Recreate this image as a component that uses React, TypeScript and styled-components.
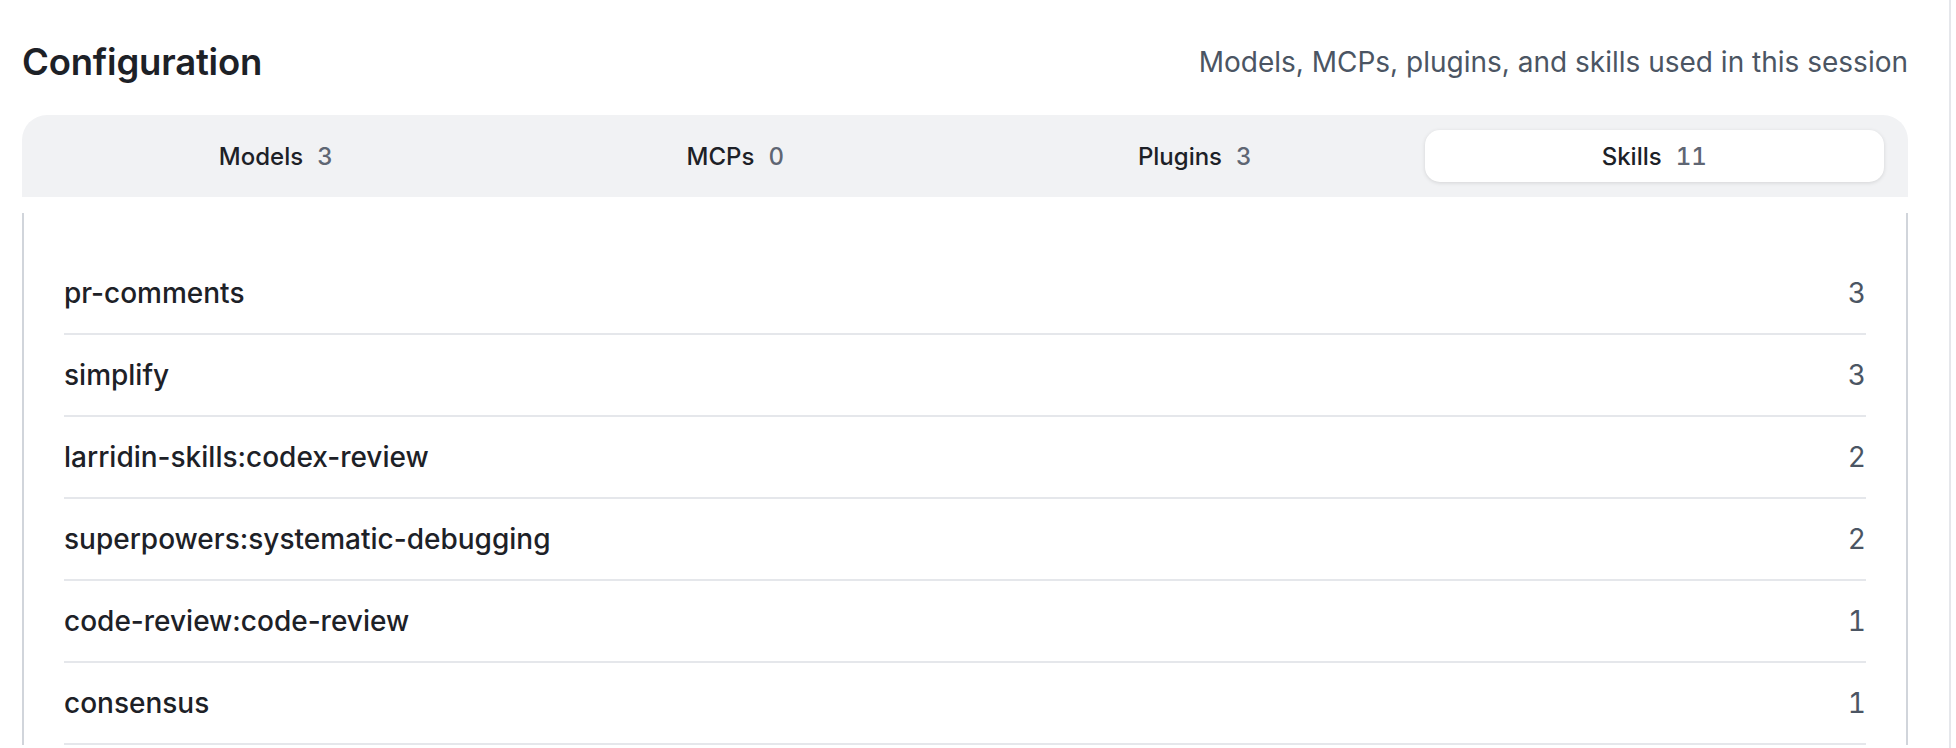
import React, { useState } from "react";
import styled, { createGlobalStyle } from "styled-components";

type TabKey = "models" | "mcps" | "plugins" | "skills";

const tabs: { key: TabKey; label: string; count: number }[] = [
  { key: "models", label: "Models", count: 3 },
  { key: "mcps", label: "MCPs", count: 0 },
  { key: "plugins", label: "Plugins", count: 3 },
  { key: "skills", label: "Skills", count: 11 },
];

const skills: { name: string; uses: number }[] = [
  { name: "pr-comments", uses: 3 },
  { name: "simplify", uses: 3 },
  { name: "larridin-skills:codex-review", uses: 2 },
  { name: "superpowers:systematic-debugging", uses: 2 },
  { name: "code-review:code-review", uses: 1 },
  { name: "consensus", uses: 1 },
];

const App: React.FC = () => {
  const [active, setActive] = useState<TabKey>("skills");

  return (
    <>
      <GlobalStyle />
      <Page>
        <Main>
          <Header>
            <Title>Configuration</Title>
            <Subtitle>Models, MCPs, plugins, and skills used in this session</Subtitle>
          </Header>

          <TabList>
            {tabs.map((t) => (
              <Tab key={t.key} $active={active === t.key} onClick={() => setActive(t.key)}>
                {t.label}
                <TabCount>{t.count}</TabCount>
              </Tab>
            ))}
          </TabList>

          <Panel>
            {skills.map((s) => (
              <Row key={s.name}>
                <RowName>{s.name}</RowName>
                <RowCount>{s.uses}</RowCount>
              </Row>
            ))}
          </Panel>
        </Main>
      </Page>
    </>
  );
};

const GlobalStyle = createGlobalStyle`
  html, body {
    margin: 0;
    background: #ffffff;
  }
  body {
    font-family: Inter, "Noto Sans", sans-serif;
    color: #1d2127;
    -webkit-font-smoothing: antialiased;
  }
`;

const Page = styled.div`
  display: flex;
  min-height: 748px;
`;

const Main = styled.main`
  width: 1951px;
  box-sizing: border-box;
  border-right: 2px solid #e5e7eb;
  padding: 40px 41px 0 22px;
`;

const Header = styled.header`
  display: flex;
  justify-content: space-between;
  align-items: center;
  height: 44px;
  margin-bottom: 31px;
`;

const Title = styled.h2`
  margin: 0;
  font-size: 36.5px;
  font-weight: 600;
  letter-spacing: -0.2px;
  color: #1d2127;
`;

const Subtitle = styled.p`
  margin: 0;
  font-size: 28px;
  color: #4b5563;
`;

const TabList = styled.div`
  display: grid;
  grid-template-columns: repeat(4, 1fr);
  padding: 15px 24px;
  background: #f1f2f4;
  border-radius: 25px 25px 0 0;
`;

const Tab = styled.button<{ $active: boolean }>`
  display: flex;
  align-items: center;
  justify-content: center;
  height: 52px;
  border: none;
  border-radius: 15px;
  font-family: inherit;
  font-size: 24px;
  font-weight: 500;
  color: #1d2127;
  cursor: pointer;
  background: ${(p) => (p.$active ? "#ffffff" : "transparent")};
  box-shadow: ${(p) => (p.$active ? "0 1px 4px rgba(0, 0, 0, 0.12)" : "none")};
`;

const TabCount = styled.span`
  margin-left: 14px;
  color: #5f6673;
  font-variant-numeric: tabular-nums;
`;

const Panel = styled.section`
  margin-top: 16px;
  padding: 40px 40px 0;
  border-left: 2px solid #d1d5db;
  border-right: 2px solid #d1d5db;
`;

const Row = styled.div`
  display: flex;
  align-items: center;
  justify-content: space-between;
  height: 82px;
  box-sizing: border-box;
  border-bottom: 2px solid #e5e7eb;
  font-size: 28px;
  font-weight: 500;
`;

const RowName = styled.span`
  color: #1d2127;
`;

const RowCount = styled.span`
  color: #4b5563;
  font-weight: 400;
  font-variant-numeric: tabular-nums;
`;

export default App;
